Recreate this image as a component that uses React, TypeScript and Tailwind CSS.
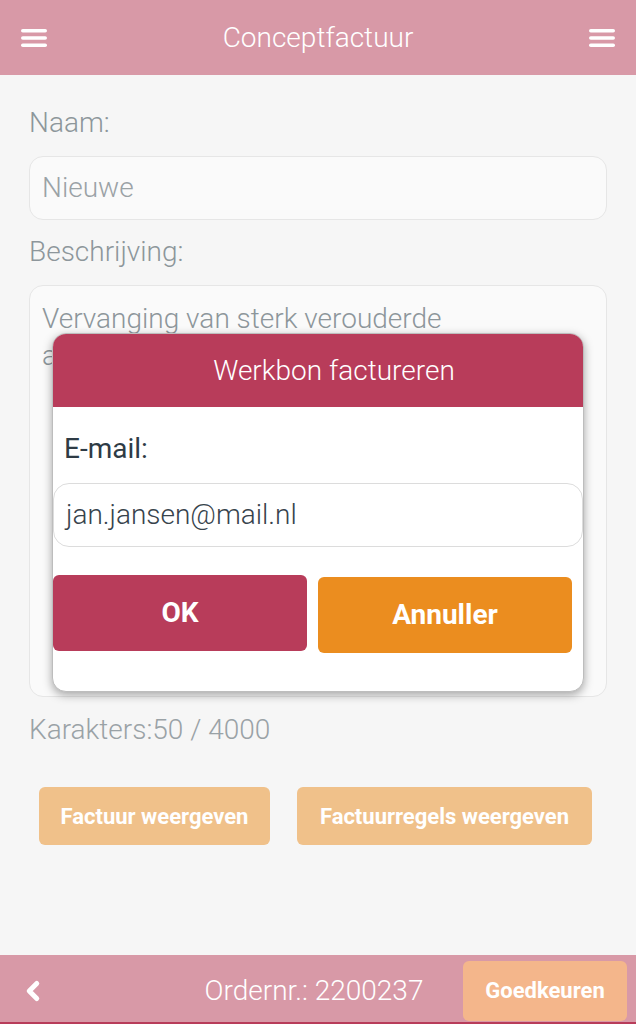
import { ChevronLeft } from 'lucide-react';

const MenuIcon = () => (
  <svg width="26" height="18" viewBox="0 0 26 18" fill="none">
    <rect x="0" y="0" width="26" height="3.5" rx="1.75" fill="white" />
    <rect x="0" y="7.2" width="26" height="3.5" rx="1.75" fill="white" />
    <rect x="0" y="14.5" width="26" height="3.5" rx="1.75" fill="white" />
  </svg>
);

export default function App() {
  return (
    <div
      className="relative flex h-[1024px] w-[636px] flex-col overflow-hidden bg-[#f6f6f6]"
      style={{ fontFamily: 'Roboto, "Noto Sans", sans-serif' }}
    >
      {/* Kopbalk */}
      <header className="flex h-[75px] shrink-0 items-center justify-between bg-[#d899a7] px-[21px]">
        <MenuIcon />
        <h1 className="text-[28px] font-light text-white">Conceptfactuur</h1>
        <MenuIcon />
      </header>

      {/* Formulier */}
      <main className="flex flex-1 flex-col px-[29px] pt-[32px]">
        <label className="mb-[17px] text-[28px] font-light leading-[32px] text-[#8d969b]">
          Naam:
        </label>
        <div className="flex h-[64px] items-center rounded-[14px] border border-[#e6e6e6] bg-[#fafafa] px-[12px] text-[28px] font-light text-[#9aa2a6]">
          Nieuwe
        </div>
        <label className="mt-[16px] mb-[17px] text-[28px] font-light leading-[32px] text-[#8d969b]">
          Beschrijving:
        </label>
        <div className="h-[412px] rounded-[14px] border border-[#e6e6e6] bg-[#fafafa] px-[12px] pt-[14px] text-[28px] font-light leading-[37px] text-[#8d969b]">
          Vervanging van sterk verouderde
          <br />
          aansluitleidingen.
        </div>
        <div className="mt-[17px] text-[28px] font-light leading-[32px] text-[#9aa2a6]">
          Karakters:50 / 4000
        </div>
        <div className="mt-[41px] flex gap-[27px] px-[10px]">
          <button className="h-[58px] w-[231px] rounded-[6px] bg-[#f0c18a] text-[22px] font-bold text-white">
            Factuur weergeven
          </button>
          <button className="h-[58px] w-[295px] rounded-[6px] bg-[#f0c18a] text-[22px] font-bold text-white">
            Factuurregels weergeven
          </button>
        </div>
      </main>

      {/* Voetbalk */}
      <footer className="flex h-[69px] shrink-0 flex-col bg-[#d899a7]">
        <div className="grid flex-1 grid-cols-[1fr_auto_1fr] items-center px-[9px] pt-[4px]">
          <ChevronLeft className="ml-[9px] h-[30px] w-[30px] text-white" strokeWidth={4} />
          <div className="pr-[8px] text-[28px] font-light text-white">Ordernr.: 2200237</div>
          <div className="flex justify-end">
            <button className="h-[60px] w-[164px] rounded-[6px] bg-[#f4b68b] text-[22px] font-bold text-white">
              Goedkeuren
            </button>
          </div>
        </div>
        <div className="h-[2px] bg-[#b83c5a]" />
      </footer>

      {/* Dialoog */}
      <div className="absolute left-[52px] top-[333px] w-[532px] overflow-hidden rounded-[14px] border border-[#bdbdbd] bg-white shadow-[0_3px_10px_rgba(0,0,0,0.35)]">
        <div className="flex h-[73px] items-center justify-center bg-[#b83c5a] pl-[32px] text-[28px] font-light text-white">
          Werkbon factureren
        </div>
        <div className="flex flex-col pb-[38px]">
          <div className="px-[11px] pt-[26px] text-[28px] leading-[32px] text-[#2e3b45]">E-mail:</div>
          <div className="mt-[18px] flex h-[64px] items-center rounded-[16px] border border-[#dcdcdc] px-[12px] text-[28px] font-light text-[#37434c]">
            jan.jansen@mail.nl
          </div>
          <div className="mt-[28px] flex items-start gap-[11px] pr-[11px]">
            <button className="h-[76px] flex-1 rounded-[6px] bg-[#b83c5a] text-[28px] font-bold text-white">
              OK
            </button>
            <button className="mt-[2px] h-[76px] flex-1 rounded-[6px] bg-[#eb8d1f] text-[28px] font-bold text-white">
              Annuller
            </button>
          </div>
        </div>
      </div>
    </div>
  );
}
